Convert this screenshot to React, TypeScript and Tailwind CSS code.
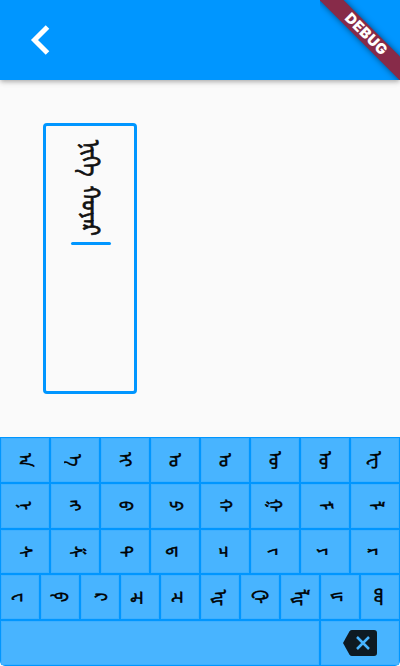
import React from 'react';

const rows: string[][] = [
  ['ᠠ', 'ᠡ', 'ᠢ', 'ᠣ', 'ᠤ', 'ᠥ', 'ᠦ', 'ᠧ'],
  ['ᠨ', 'ᠩ', 'ᠪ', 'ᠫ', 'ᠬ', 'ᠭ', 'ᠮ', 'ᠯ'],
  ['ᠰ', 'ᠱ', 'ᠲ', 'ᠳ', 'ᠴ', 'ᠵ', 'ᠶ', 'ᠷ'],
  ['ᠸ', 'ᠹ', 'ᠺ', 'ᠼ', 'ᠽ', 'ᠾ', 'ᠿ', 'ᡀ', 'ᡁ', 'ᡂ'],
];

const mongolian = "[font-family:'Noto_Sans_Mongolian','Mongolian_Baiti','Noto_Sans',sans-serif] [writing-mode:vertical-lr]";

function Key({ children }: { children?: React.ReactNode }) {
  return (
    <button className="m-px flex min-w-0 flex-1 items-center justify-center border border-[#3eafff] bg-[#48b4ff] text-black">
      {children}
    </button>
  );
}

export default function App() {
  return (
    <div className="relative flex h-[666px] w-[400px] flex-col overflow-hidden bg-[#fafafa]">
      <header className="z-10 flex h-20 shrink-0 items-center bg-[#0096ff] pl-[30px] shadow-[0_2px_4px_-1px_rgba(0,0,0,0.2),0_3px_5px_rgba(0,0,0,0.1),0_1px_8px_rgba(0,0,0,0.08)]">
        <svg width="20" height="30" viewBox="0 0 20 30" fill="none" stroke="#fff" strokeWidth="5">
          <path d="M17.500 2 4.500 15l13 13" />
        </svg>
      </header>

      <main className="flex flex-1 items-start pl-[43px] pt-[43px]">
        <div className="flex h-[271px] w-[94px] flex-col items-center rounded-[4px] border-[3px] border-[#0096ff] pt-[14px]">
          <div className={`ml-[11px] h-[99px] scale-x-125 whitespace-nowrap text-[20px] leading-[40px] text-[#111] [-webkit-text-stroke:0.7px_#111] [word-spacing:4px] ${mongolian}`}>ᠨᠢᠭᠡ ᠬᠣᠶᠠᠷ</div>
          <div className="ml-[2px] mt-[3px] h-[3px] w-10 shrink-0 rounded-full bg-[#0096ff]" />
        </div>
      </main>

      <section className="flex h-[229px] shrink-0 flex-col rounded-b-[5px] bg-[#0096ff]">
        {rows.map((row, i) => (
          <div key={i} className="flex flex-1">
            {row.map((letter) => (
              <Key key={letter}>
                <span className={`ml-[8px] scale-x-120 text-[15px] leading-none [-webkit-text-stroke:0.5px_#000] ${mongolian}`}>{letter}</span>
              </Key>
            ))}
          </div>
        ))}
        <div className="flex flex-1">
          <div className="flex w-80"><Key /></div>
          <div className="flex w-20">
            <Key>
              <svg width="36" height="28" viewBox="0 0 36 28">
                <path d="M10 1h22q3 0 3 3v20q0 3-3 3H10q-1.500 0-2.500-1.300L1 14 7.500 2.300Q8.500 1 10 1Z" fill="#0e1a22" />
                <path d="m15 8 12 12M27 8 15 20" stroke="#48b4ff" strokeWidth="2.500" />
              </svg>
            </Key>
          </div>
        </div>
      </section>

      <div className="absolute right-0 top-0 z-20 h-20 w-20 overflow-hidden">
        <div className="absolute left-[-29px] top-[25.5px] flex h-[17px] w-[150px] rotate-45 items-center justify-center bg-[#872b49] font-['Inter'] text-[14.5px] font-black leading-none tracking-[0.5px] text-white shadow-[0_0_6px_rgba(0,0,0,0.5)]">DEBUG</div>
      </div>
    </div>
  );
}
